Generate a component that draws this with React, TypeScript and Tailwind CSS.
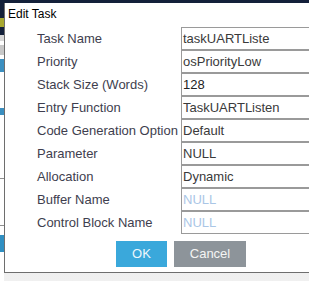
const rows = [
  { label: "Task Name", value: "taskUARTListe" },
  { label: "Priority", value: "osPriorityLow" },
  { label: "Stack Size (Words)", value: "128", dark: true },
  { label: "Entry Function", value: "TaskUARTListen" },
  { label: "Code Generation Option", value: "Default" },
  { label: "Parameter", value: "NULL" },
  { label: "Allocation", value: "Dynamic" },
  { label: "Buffer Name", value: "NULL", muted: true },
  { label: "Control Block Name", value: "NULL", muted: true },
]

const App = () => {
  return (
    <div className="w-[309px] h-[281px] overflow-hidden bg-gradient-to-b from-[#dcdcdc] to-[#f0f0f0] flex flex-col font-['Liberation_Sans',Arial,sans-serif]">
      <div className="h-[3px] bg-[#13203a] shrink-0" />
      <div className="flex flex-1 min-h-0">
        {/* app behind the dialog */}
        <div className="w-[4px] shrink-0 flex flex-col bg-white">
          <div className="h-[15px] bg-[#13203a]" />
          <div className="h-[9px] bg-[#a8a830]" />
          <div className="h-[8px] bg-[#13203a]" />
          <div className="h-[6px] bg-[#d8d8d8]" />
          <div className="h-[4px] bg-white" />
          <div className="h-[10px] bg-[#c8c8c8]" />
          <div className="h-[4px] bg-white" />
          <div className="h-[13px] bg-[#3b8fc0]" />
          <div className="h-[36px] bg-white" />
          <div className="h-[7px] bg-[#3b8fc0]" />
          <div className="h-[63px] bg-white" />
          <div className="h-[1px] bg-[#909090]" />
          <div className="h-[46px] bg-white" />
          <div className="h-[1px] bg-[#909090]" />
          <div className="h-[9px] bg-white" />
          <div className="h-[17px] bg-[#2f8fc2]" />
          <div className="flex-1 bg-white" />
        </div>
        <div className="w-[330px] h-[270px] shrink-0 bg-white border-l border-b border-[#6e6e6e] flex flex-col">
          <div className="h-[24px] pl-[3px] pt-[4px] text-[12px] leading-[15px] text-black">Edit Task</div>
          <div className="pl-[32px] grid grid-cols-[144px_160px]">
            {rows.map((r) => (
              <div key={r.label} className="contents">
                <div className="h-[23px] flex items-center text-[13px] text-[#3e3e4e] whitespace-nowrap">{r.label}</div>
                <div
                  className={`h-[23px] border border-[#9a9a9a] flex items-center pl-[1px] text-[13px] ${
                    r.muted ? "text-[#aac6e6]" : r.dark ? "text-[#222]" : "text-[#3a3a3a]"
                  }`}
                >
                  {r.value}
                </div>
              </div>
            ))}
          </div>
          <div className="mt-[7px] pl-[111px] flex gap-[7px]">
            <button className="w-[51px] h-[26px] bg-[#3aa8db] text-[#eef7fc] text-[13px]">OK</button>
            <button className="w-[72px] h-[26px] bg-[#8d949a] text-[#f4f4f4] text-[13px]">Cancel</button>
          </div>
        </div>
      </div>
    </div>
  )
}

export default App
